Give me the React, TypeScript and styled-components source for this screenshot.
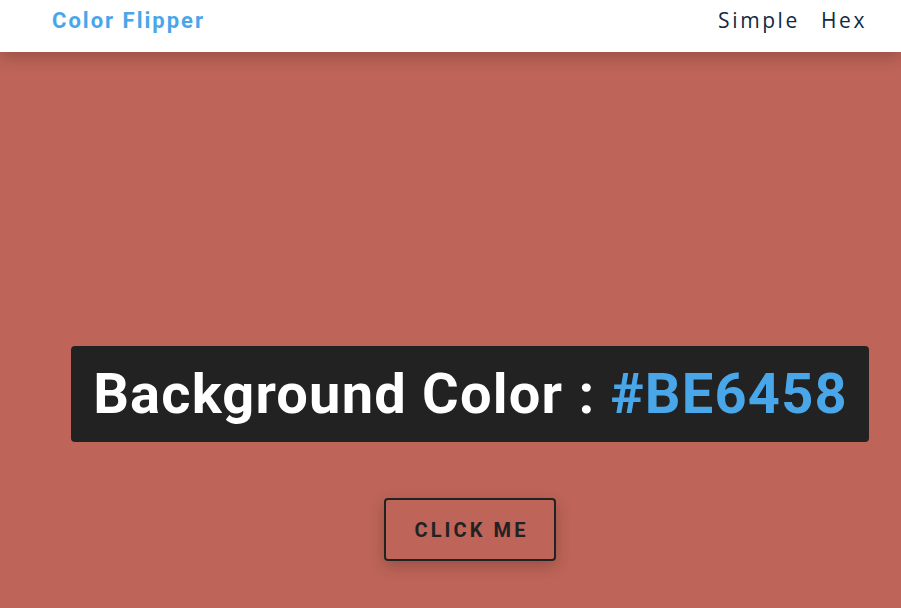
import React, { useState } from 'react'
import styled, { createGlobalStyle } from 'styled-components'

const colors = ['#BE6458', '#49A6E9', '#F15025', '#2E8B57', '#6A5ACD']

const GlobalStyle = createGlobalStyle`
  html, body {
    margin: 0;
    padding: 0;
  }
  body {
    font-family: 'Open Sans', 'Liberation Sans', sans-serif;
    line-height: 1.5;
    font-size: 16px;
  }
`

const Page = styled.main<{ bg: string }>`
  min-height: 608px;
  background: ${({ bg }) => bg};
`

const Nav = styled.nav`
  position: relative;
  z-index: 1;
  height: 52px;
  background: #fff;
  box-shadow: 0 5px 15px rgba(0, 0, 0, 0.2);
  display: flex;
  align-items: center;
  justify-content: space-between;
  padding: 0 34px 0 52px;
`

const Logo = styled.h4`
  margin: 0;
  font-family: Roboto, 'Liberation Sans', sans-serif;
  font-weight: 700;
  font-size: 22px;
  letter-spacing: 2px;
  color: #49a6e9;
  line-height: 1;
  padding-bottom: 11px;
`

const Links = styled.ul`
  display: flex;
  gap: 21px;
  margin: 0;
  padding: 0 0 8px;
  list-style: none;
`

const NavLink = styled.a`
  font-family: 'Open Sans', 'Liberation Sans', sans-serif;
  font-size: 21px;
  font-weight: 500;
  letter-spacing: 2.6px;
  color: #102a42;
  text-decoration: none;
  line-height: 1;
`

const Container = styled.section`
  display: flex;
  flex-direction: column;
  align-items: center;
  padding: 294px 0 0 39px;
`

const Title = styled.h2`
  margin: 0 0 56px;
  background: #222;
  color: #fff;
  padding: 16px 21px 16px 22px;
  border-radius: 4px;
  font-family: Roboto, 'Liberation Sans', sans-serif;
  font-weight: 700;
  font-size: 56px;
  line-height: 64px;
  letter-spacing: 1.2px;
  white-space: nowrap;
`

const HexValue = styled.span`
  color: #49a6e9;
`

const HeroButton = styled.button`
  font-family: Roboto, 'Liberation Sans', sans-serif;
  text-transform: uppercase;
  background: transparent;
  color: #222;
  letter-spacing: 3.1px;
  font-weight: 700;
  font-size: 20px;
  width: 172px;
  height: 63px;
  padding: 0 0 0 3px;
  border: 2px solid #222;
  border-radius: 4px;
  box-shadow: 0 5px 15px rgba(0, 0, 0, 0.2);
  cursor: pointer;
`

export default function App() {
  const [color, setColor] = useState(colors[0])

  const flip = () => {
    const next = colors[Math.floor(Math.random() * colors.length)]
    setColor(next)
  }

  return (
    <>
      <GlobalStyle />
      <Page bg={color}>
        <Nav>
          <Logo>Color Flipper</Logo>
          <Links>
            <li><NavLink href="#">Simple</NavLink></li>
            <li><NavLink href="#">Hex</NavLink></li>
          </Links>
        </Nav>
        <Container>
          <Title>
            Background Color : <HexValue>{color}</HexValue>
          </Title>
          <HeroButton onClick={flip}>Click Me</HeroButton>
        </Container>
      </Page>
    </>
  )
}
